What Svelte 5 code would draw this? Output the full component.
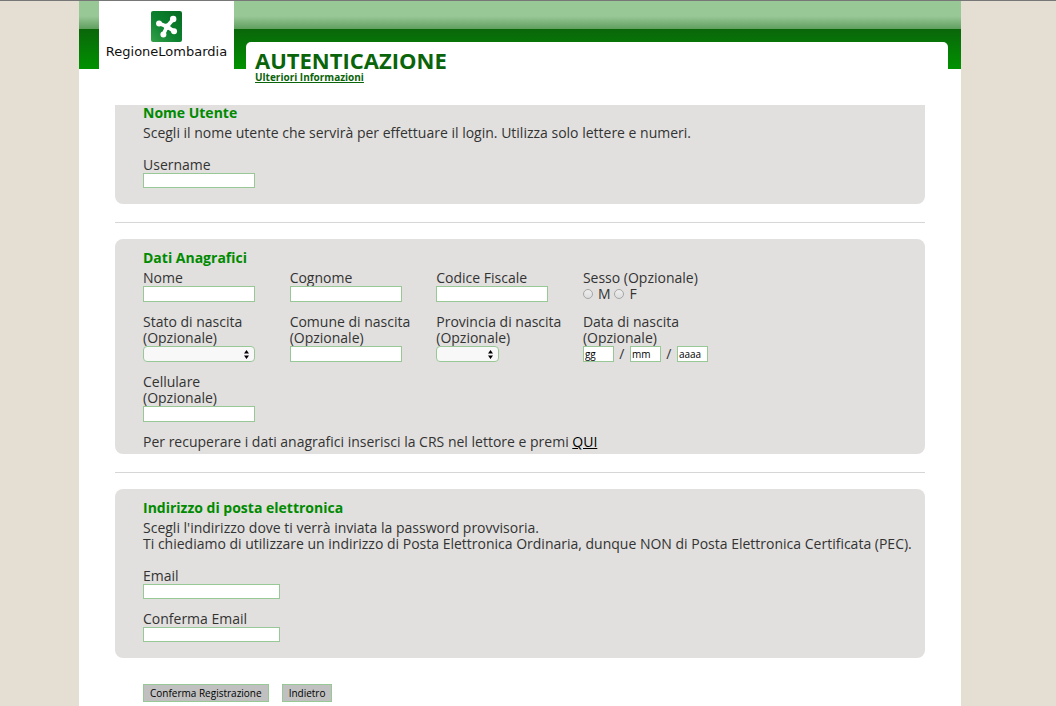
<script lang="ts">
	let username = $state('');
	let nome = $state('');
	let cognome = $state('');
	let codiceFiscale = $state('');
	let sesso = $state('');
	let stato = $state('');
	let comune = $state('');
	let provincia = $state('');
	let giorno = $state('gg');
	let mese = $state('mm');
	let anno = $state('aaaa');
	let cellulare = $state('');
	let email = $state('');
	let confermaEmail = $state('');

	function onSubmit(e: SubmitEvent) {
		e.preventDefault();
	}
</script>

{#snippet arrows()}
	<svg class="arrows" viewBox="0 0 5 9" width="5" height="9" aria-hidden="true">
		<path d="M2.5 0 L5 3.6 H0 Z M2.5 9 L0 5.4 H5 Z" />
	</svg>
{/snippet}

<div class="shell">
	<div class="page">
		<header>
			<div class="logo">
				<svg viewBox="0 0 30 30" width="31" height="31" aria-hidden="true">
					<defs>
						<linearGradient id="rosa" x1="1" y1="0" x2="0" y2="1">
							<stop offset="0" stop-color="#066a20" />
							<stop offset="0.55" stop-color="#0c8230" />
							<stop offset="1" stop-color="#36a04a" />
						</linearGradient>
					</defs>
					<rect width="30" height="30" rx="2" fill="url(#rosa)" />
					<g fill="#fff">
						<path d="M8 12 L15.500 15 L21.500 8 M12 22.500 L15.500 15 L22 19.500" fill="none" stroke="#fff" stroke-width="3.600" stroke-linejoin="round" />
						<circle cx="15.500" cy="15.300" r="3.200" />
						<circle cx="7.800" cy="12" r="2.900" />
						<circle cx="21.500" cy="7.800" r="3.100" />
						<circle cx="22.300" cy="19.600" r="2.900" />
						<circle cx="12" cy="22.700" r="2.900" />
					</g>
				</svg>
				<span>RegioneLombardia</span>
			</div>
			<div class="title">
				<h1>AUTENTICAZIONE</h1>
				<a href="#info">Ulteriori Informazioni</a>
			</div>
		</header>

		<form onsubmit={onSubmit}>
			<section class="first">
				<h2>Nome Utente</h2>
				<p>Scegli il nome utente che servirà per effettuare il login. Utilizza solo lettere e numeri.</p>
				<div class="stack">
					<div class="field">
						<label for="username">Username</label>
						<input id="username" type="text" bind:value={username} />
					</div>
				</div>
			</section>

			<hr />

			<section class="anagrafica">
				<h2>Dati Anagrafici</h2>
				<div class="grid">
					<div class="field">
						<label for="nome">Nome</label>
						<input id="nome" type="text" bind:value={nome} />
					</div>
					<div class="field">
						<label for="cognome">Cognome</label>
						<input id="cognome" type="text" bind:value={cognome} />
					</div>
					<div class="field">
						<label for="cf">Codice Fiscale</label>
						<input id="cf" type="text" bind:value={codiceFiscale} />
					</div>
					<div class="field" role="radiogroup" aria-labelledby="sesso">
						<span id="sesso">Sesso (Opzionale)</span>
						<div class="radios">
							<label><input type="radio" name="sesso" value="M" bind:group={sesso} />M</label>
							<label><input type="radio" name="sesso" value="F" bind:group={sesso} />F</label>
						</div>
					</div>

					<div class="field">
						<label for="stato">Stato di nascita<br />(Opzionale)</label>
						<div class="select">
							<select id="stato" bind:value={stato}><option value=""></option></select>
							{@render arrows()}
						</div>
					</div>
					<div class="field">
						<label for="comune">Comune di nascita<br />(Opzionale)</label>
						<input id="comune" type="text" bind:value={comune} />
					</div>
					<div class="field">
						<label for="provincia">Provincia di nascita<br />(Opzionale)</label>
						<div class="select short">
							<select id="provincia" bind:value={provincia}><option value=""></option></select>
							{@render arrows()}
						</div>
					</div>
					<div class="field">
						<label for="giorno">Data di nascita<br />(Opzionale)</label>
						<div class="date">
							<input id="giorno" type="text" aria-label="Giorno" bind:value={giorno} />
							<span>/</span>
							<input type="text" aria-label="Mese" bind:value={mese} />
							<span>/</span>
							<input type="text" aria-label="Anno" bind:value={anno} />
						</div>
					</div>

					<div class="field">
						<label for="cellulare">Cellulare<br />(Opzionale)</label>
						<input id="cellulare" type="text" bind:value={cellulare} />
					</div>
				</div>
				<p class="crs">Per recuperare i dati anagrafici inserisci la CRS nel lettore e premi <a href="#crs">QUI</a></p>
			</section>

			<hr />

			<section>
				<h2>Indirizzo di posta elettronica</h2>
				<p>Scegli l'indirizzo dove ti verrà inviata la password provvisoria.</p>
				<p>Ti chiediamo di utilizzare un indirizzo di Posta Elettronica Ordinaria, dunque NON di Posta Elettronica Certificata (PEC).</p>
				<div class="stack wide">
					<div class="field">
						<label for="email">Email</label>
						<input id="email" type="email" bind:value={email} />
					</div>
					<div class="field">
						<label for="email2">Conferma Email</label>
						<input id="email2" type="email" bind:value={confermaEmail} />
					</div>
				</div>
			</section>

			<div class="actions">
				<button type="submit">Conferma Registrazione</button>
				<button type="button">Indietro</button>
			</div>
		</form>
	</div>
</div>

<style>
	:global(body) {
		background: #e5ded3;
	}

	.shell {
		box-sizing: border-box;
		min-height: 100vh;
		padding-right: 16px;
		border-top: 1px solid #777;
		display: flex;
		justify-content: center;
		font-family: 'Trebuchet MS', 'Open Sans', sans-serif;
		font-size: 14px;
		line-height: 16px;
		color: #333;
	}

	.page {
		width: 100%;
		max-width: 882px;
		background: #fff;
	}

	header {
		display: flex;
		height: 104px;
		padding: 0 13px 0 20px;
		box-sizing: border-box;
		background: linear-gradient(#99c897 0 15px, #5f9f5e 28px, #0a660a 28px, #009200 68px) no-repeat 0 0 / 100% 68px;
	}

	.logo {
		width: 135px;
		height: 68px;
		padding-top: 10px;
		box-sizing: border-box;
		background: #fff;
		display: flex;
		flex-direction: column;
		align-items: center;
		gap: 2px;
		font-family: 'DejaVu Sans', sans-serif;
		font-size: 13px;
		color: #111;
	}

	.title {
		flex: 1;
		margin: 41px 0 0 12px;
		padding: 6px 9px 0;
		background: #fff;
		border-radius: 5px 5px 0 0;
		display: flex;
		flex-direction: column;
		align-items: flex-start;
	}

	h1 {
		margin: 0;
		font-size: 22px;
		line-height: 24px;
		color: #0a640a;
	}

	.title a {
		font-size: 10px;
		line-height: 11px;
		font-weight: bold;
		color: #0a640a;
	}

	form { padding: 0 36px; }

	section {
		padding: 11px 0 16px 28px;
		background: #e1e0de;
		border-radius: 8px;
	}

	.first {
		padding-top: 0;
		border-radius: 0 0 8px 8px;
	}

	.anagrafica { padding-bottom: 4px; }

	h2 {
		margin: 0 0 5px;
		font-size: 14px;
		line-height: 15px;
		color: #008a00;
	}

	p { margin: 0; }

	hr {
		height: 1px;
		margin: 18px 0 16px;
		border: 0;
		background: #d6d6d6;
	}

	.stack {
		margin-top: 16px;
		display: flex;
		flex-direction: column;
		gap: 12px;
	}

	.grid {
		display: grid;
		grid-template-columns: repeat(4, 3fr) 4fr;
		row-gap: 12px;
	}

	.grid .field:nth-child(4n + 1) { grid-column: 1; }

	.field {
		display: flex;
		flex-direction: column;
		align-items: flex-start;
		white-space: nowrap;
		min-width: 0;
	}

	input, select {
		box-sizing: border-box;
		width: 112px;
		height: 16px;
		margin: 0;
		padding: 0 1px;
		border: 1px solid #99c897;
		border-radius: 0;
		background: #fff;
		font-family: 'Trebuchet MS', 'Open Sans', sans-serif;
		font-size: 10px;
		color: #000;
	}

	.stack input { height: 15px; }

	.wide input { width: 137px; }

	.radios {
		display: flex;
		gap: 4px;
		height: 16px;
	}

	.radios label {
		display: flex;
		align-items: center;
		gap: 5px;
	}

	input[type='radio'] {
		appearance: none;
		width: 10px;
		height: 10px;
		border-color: #a6a6a6;
		border-radius: 50%;
		background: linear-gradient(#eee, #ddd);
	}

	input[type='radio']:checked { background: radial-gradient(#333 0 2px, #eee 3px); }

	.select {
		position: relative;
		width: 112px;
		height: 16px;
	}

	.select.short { width: 63px; }

	select {
		appearance: none;
		display: block;
		width: 100%;
		border-radius: 4px;
		background: #f8f8f8;
	}

	.arrows {
		position: absolute;
		top: 4px;
		right: 6px;
		pointer-events: none;
	}

	.date {
		display: flex;
		gap: 5px;
	}

	.date input { width: 31px; }

	.date span {
		width: 6px;
		text-align: center;
	}

	.crs { margin-top: 12px; }

	.crs a { color: #000; }

	.actions {
		display: flex;
		gap: 13px;
		padding: 26px 28px 3px;
	}

	button {
		height: 18px;
		padding: 0 6px;
		border: 1px solid #99c897;
		background: #c0c0c0;
		font-family: 'Trebuchet MS', 'Open Sans', sans-serif;
		font-size: 10px;
		line-height: 16px;
		color: #000;
	}
</style>
